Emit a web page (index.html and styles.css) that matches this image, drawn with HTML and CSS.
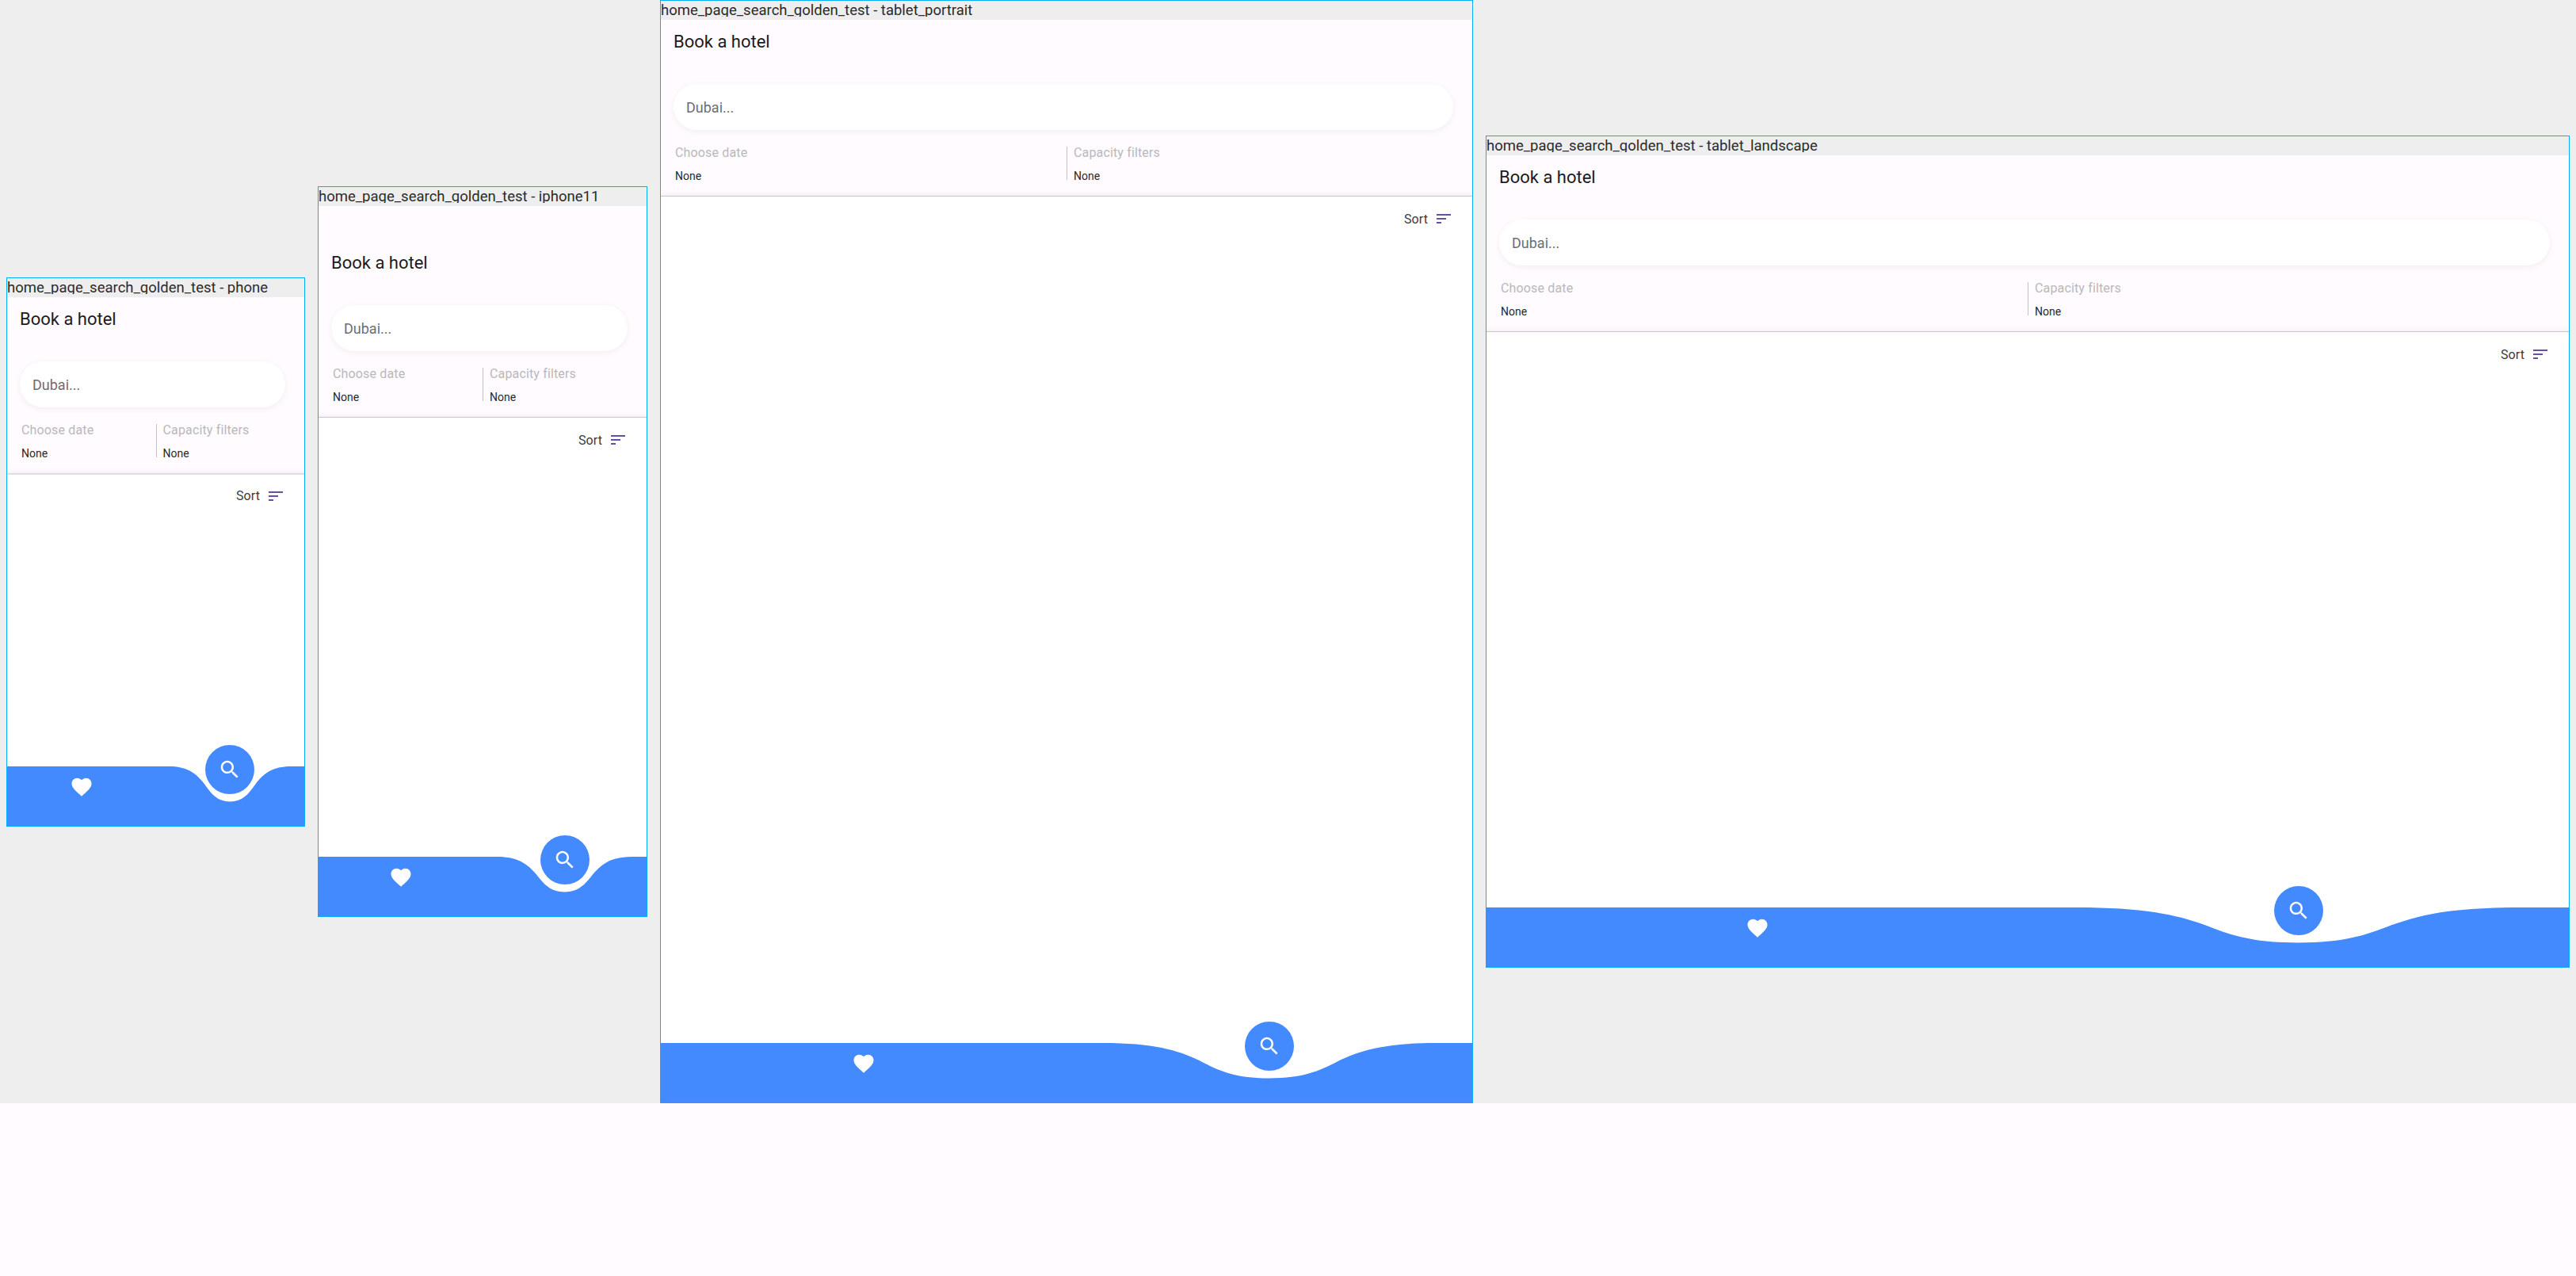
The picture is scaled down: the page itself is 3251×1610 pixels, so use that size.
FILE: index.html
```html
<!DOCTYPE html>
<html lang="en">
<head>
<meta charset="UTF-8">
<title>home_page_search_golden_test</title>
<link rel="stylesheet" href="styles.css">
</head>
<body>
    <svg class="defs" width="0" height="0">
        <symbol id="icon-sort" viewBox="0 0 24 24"><path d="M3 18h6v-2H3v2zM3 6v2h18V6H3zm0 7h12v-2H3v2z"/></symbol>
        <symbol id="icon-heart" viewBox="0 0 24 24"><path d="M12 21.35l-1.45-1.32C5.4 15.36 2 12.28 2 8.5 2 5.42 4.42 3 7.5 3c1.74 0 3.34.81 4.5 2.09C13.16 3.81 14.76 3 16.5 3 19.58 3 22 5.42 22 8.5c0 3.78-3.4 6.86-8.55 11.54L12 21.35z"/></symbol>
        <symbol id="icon-search" viewBox="0 0 24 24"><path d="M15.5 14h-.79l-.28-.27C15.41 12.59 16 11.11 16 9.5 16 5.91 13.09 3 9.5 3S3 5.91 3 9.5 5.91 16 9.5 16c1.61 0 3.09-.59 4.23-1.57l.27.28v.79l5 4.99L20.49 19l-4.99-5zm-6 0C7.01 14 5 11.99 5 9.5S7.01 5 9.5 5 14 7.01 14 9.5 11.99 14 9.5 14z"/></symbol>
    </svg>

    <div class="row">
        <div class="device phone">
            <div class="device-label"><span>home_page_search_golden_test - phone</span></div>
            <div class="screen">
                <div class="header">
                    <h2>Book a hotel</h2>
                    <div class="search">Dubai...</div>
                    <div class="filters">
                        <div class="filter"><div class="filter-title">Choose date</div><div class="filter-value">None</div></div>
                        <div class="filter"><div class="filter-title">Capacity filters</div><div class="filter-value">None</div></div>
                    </div>
                </div>
                <div class="results">
                    <div class="sort">Sort <svg class="sort-icon"><use href="#icon-sort"/></svg></div>
                </div>
                <div class="bar">
                    <svg class="bar-bg" viewBox="0 0 1000 76" preserveAspectRatio="none"><path d="M0 0H545C606.5 0 637 9 664 22.5C688.5 36 709 45 750 45C791 45 811.5 36 836 22.5C863 9 893.5 0 955 0H1000V76H0Z"/></svg>
                    <div class="bar-slot"><svg class="nav-icon heart"><use href="#icon-heart"/></svg></div>
                    <div class="bar-slot"><div class="fab"><svg class="nav-icon"><use href="#icon-search"/></svg></div></div>
                </div>
            </div>
        </div>

        <div class="device iphone11">
            <div class="device-label"><span>home_page_search_golden_test - iphone11</span></div>
            <div class="screen">
                <div class="header">
                    <h2>Book a hotel</h2>
                    <div class="search">Dubai...</div>
                    <div class="filters">
                        <div class="filter"><div class="filter-title">Choose date</div><div class="filter-value">None</div></div>
                        <div class="filter"><div class="filter-title">Capacity filters</div><div class="filter-value">None</div></div>
                    </div>
                </div>
                <div class="results">
                    <div class="sort">Sort <svg class="sort-icon"><use href="#icon-sort"/></svg></div>
                </div>
                <div class="bar">
                    <svg class="bar-bg" viewBox="0 0 1000 76" preserveAspectRatio="none"><path d="M0 0H545C606.5 0 637 9 664 22.5C688.5 36 709 45 750 45C791 45 811.5 36 836 22.5C863 9 893.5 0 955 0H1000V76H0Z"/></svg>
                    <div class="bar-slot"><svg class="nav-icon heart"><use href="#icon-heart"/></svg></div>
                    <div class="bar-slot"><div class="fab"><svg class="nav-icon"><use href="#icon-search"/></svg></div></div>
                </div>
            </div>
        </div>

        <div class="device tablet-portrait">
            <div class="device-label"><span>home_page_search_golden_test - tablet_portrait</span></div>
            <div class="screen">
                <div class="header">
                    <h2>Book a hotel</h2>
                    <div class="search">Dubai...</div>
                    <div class="filters">
                        <div class="filter"><div class="filter-title">Choose date</div><div class="filter-value">None</div></div>
                        <div class="filter"><div class="filter-title">Capacity filters</div><div class="filter-value">None</div></div>
                    </div>
                </div>
                <div class="results">
                    <div class="sort">Sort <svg class="sort-icon"><use href="#icon-sort"/></svg></div>
                </div>
                <div class="bar">
                    <svg class="bar-bg" viewBox="0 0 1000 76" preserveAspectRatio="none"><path d="M0 0H545C606.5 0 637 9 664 22.5C688.5 36 709 45 750 45C791 45 811.5 36 836 22.5C863 9 893.5 0 955 0H1000V76H0Z"/></svg>
                    <div class="bar-slot"><svg class="nav-icon heart"><use href="#icon-heart"/></svg></div>
                    <div class="bar-slot"><div class="fab"><svg class="nav-icon"><use href="#icon-search"/></svg></div></div>
                </div>
            </div>
        </div>

        <div class="device tablet-landscape">
            <div class="device-label"><span>home_page_search_golden_test - tablet_landscape</span></div>
            <div class="screen">
                <div class="header">
                    <h2>Book a hotel</h2>
                    <div class="search">Dubai...</div>
                    <div class="filters">
                        <div class="filter"><div class="filter-title">Choose date</div><div class="filter-value">None</div></div>
                        <div class="filter"><div class="filter-title">Capacity filters</div><div class="filter-value">None</div></div>
                    </div>
                </div>
                <div class="results">
                    <div class="sort">Sort <svg class="sort-icon"><use href="#icon-sort"/></svg></div>
                </div>
                <div class="bar">
                    <svg class="bar-bg" viewBox="0 0 1000 76" preserveAspectRatio="none"><path d="M0 0H545C606.5 0 637 9 664 22.5C688.5 36 709 45 750 45C791 45 811.5 36 836 22.5C863 9 893.5 0 955 0H1000V76H0Z"/></svg>
                    <div class="bar-slot"><svg class="nav-icon heart"><use href="#icon-heart"/></svg></div>
                    <div class="bar-slot"><div class="fab"><svg class="nav-icon"><use href="#icon-search"/></svg></div></div>
                </div>
            </div>
        </div>
    </div>
</body>
</html>
```

FILE: styles.css
```css
html, body {
    height: 100%;
}

body {
    margin: 0;
    font-family: Roboto, sans-serif;
    background-color: #fffbfe;
    overflow: hidden;
}

.defs {
    position: absolute;
}

.row {
    display: flex;
    align-items: center;
    gap: 16px;
    height: 1392px;
    padding: 0 8px;
    background-color: #eeeeee;
}

.device {
    flex: none;
    border: 1px solid #03b0f8;
}

.phone { width: 375px; }
.iphone11 { width: 414px; }
.tablet-portrait { width: 1024px; }
.tablet-landscape { width: 1366px; }

.phone .screen { height: 667px; }
.iphone11 .screen { height: 896px; }
.tablet-portrait .screen { height: 1366px; }
.tablet-landscape .screen { height: 1024px; }

.device-label {
    height: 24px;
    font-size: 18.5px;
    color: #2b2b2b;
    white-space: nowrap;
}

.device-label span {
    display: block;
    height: 20px;
    line-height: 25px;
    overflow: hidden;
}

.screen {
    display: flex;
    flex-direction: column;
    background-color: #ffffff;
}

.header {
    padding: 12px 0 20px;
    background-color: #fffbfe;
    border-bottom: 1px solid #cac4d0;
    box-shadow: inset 0 -8px 8px -8px rgba(0, 0, 0, 0.08);
}

.iphone11 .header {
    padding-top: 56px;
}

.phone .header {
    border-bottom: 2px solid #e0dfe6;
}

.phone .sort {
    padding-top: 15px;
}

.header h2 {
    margin: 0 0 0 16px;
    font-size: 22px;
    font-weight: 400;
    line-height: 32px;
    color: #1d1b20;
}

.search {
    height: 58px;
    margin: 37px 24px 0 16px;
    padding-left: 16px;
    font-size: 18px;
    line-height: 60px;
    color: #706d72;
    background-color: #ffffff;
    border-radius: 29px;
    box-shadow: 0 2px 8px rgba(0, 0, 0, 0.06);
}

.filters {
    display: grid;
    grid-template-columns: 1fr 1fr;
    margin-top: 21px;
}

.filter {
    height: 42px;
    padding-left: 18px;
}

.filter + .filter {
    padding-left: 8px;
    border-left: 1px solid #c4c1c6;
}

.filter-title {
    font-size: 16px;
    letter-spacing: 0.15px;
    line-height: 16px;
    color: #bab8bc;
}

.filter-value {
    margin-top: 12px;
    font-size: 14px;
    line-height: 18px;
    color: #2a282d;
}

.results {
    flex: 1;
}

.sort {
    display: flex;
    justify-content: flex-end;
    align-items: center;
    gap: 8px;
    padding: 16px 24px 0 0;
    font-size: 16px;
    letter-spacing: 0.1px;
    color: #3c3a40;
}

.sort-icon {
    width: 24px;
    height: 24px;
    fill: #6750a4;
}

.bar {
    position: relative;
    display: grid;
    grid-template-columns: 1fr 1fr;
    height: 75px;
}

.bar-bg {
    position: absolute;
    left: 0;
    top: 0;
    width: 100%;
    height: 100%;
    fill: #448aff;
}

.bar-slot {
    position: relative;
    display: flex;
    justify-content: center;
    align-items: flex-start;
}

.nav-icon {
    width: 30px;
    height: 30px;
    fill: #ffffff;
}

.heart {
    margin-top: 11px;
}

.fab {
    display: flex;
    justify-content: center;
    align-items: center;
    width: 62px;
    height: 62px;
    margin-top: -27px;
    background-color: #448aff;
    border-radius: 50%;
}
```
